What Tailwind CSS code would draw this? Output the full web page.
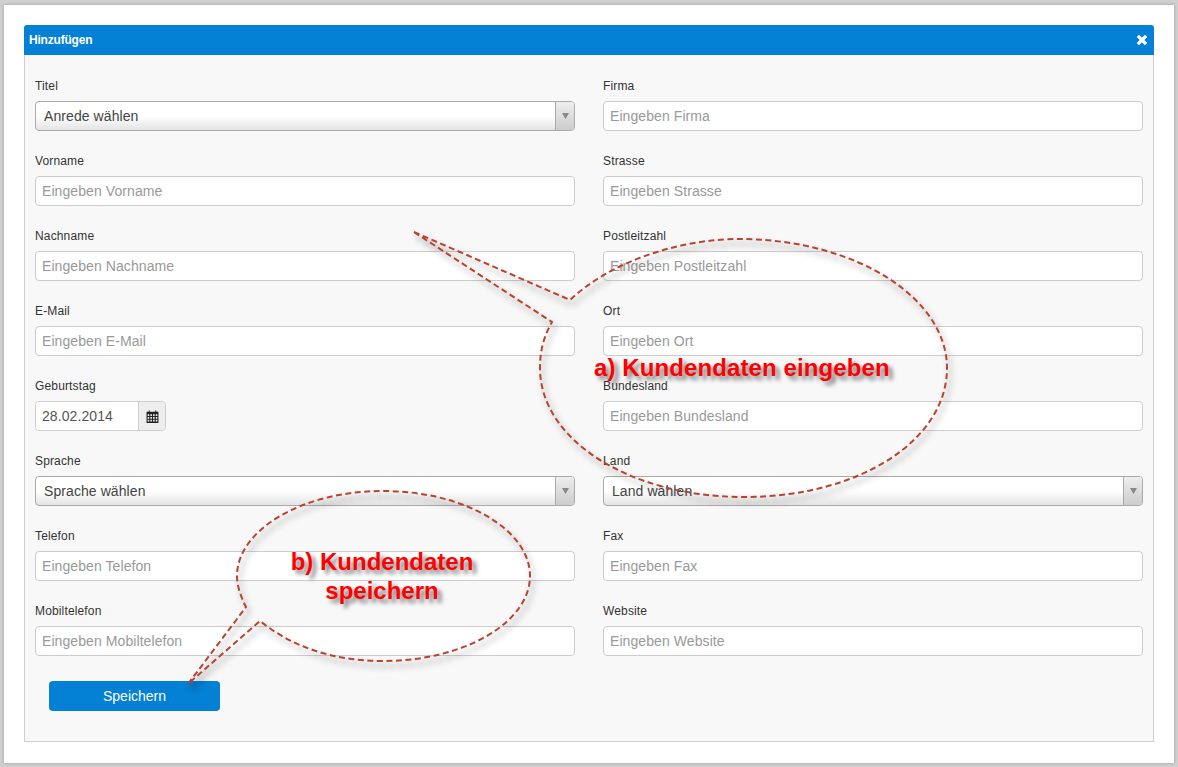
<!DOCTYPE html>
<html lang="de">
<head>
<meta charset="utf-8">
<title>Hinzufügen</title>
<script src="https://cdn.jsdelivr.net/npm/@tailwindcss/browser@4"></script>
</head>
<body class="bg-[#cfcfcf] font-['Liberation_Sans',Arial,sans-serif]">
<div class="relative w-[1178px] h-[767px] overflow-hidden pt-[5px] pl-[4px]">
  <div class="w-[1170px] h-[758px] bg-white pt-[20px] pl-[20px] shadow-[0_0_3px_rgba(0,0,0,0.25)]">
    <div class="w-[1130px]">
      <div class="h-[30px] bg-[#0480d4] rounded-t-[3px] flex items-center justify-between pl-[5px] pr-[6px]">
        <span class="text-[12px] font-bold text-white tracking-[-0.2px]">Hinzufügen</span>
        <svg width="12" height="12" viewBox="0 0 12 12"><path d="M1 3 L3 1 L6 4 L9 1 L11 3 L8 6 L11 9 L9 11 L6 8 L3 11 L1 9 L4 6 Z" fill="#fff" stroke="#fff" stroke-width="0.6" stroke-linejoin="round"/></svg>
      </div>
      <div class="h-[687px] bg-[#f8f8f8] border border-t-0 border-[#cfcfcf] px-[10px] pt-[21px]">
        <div class="grid grid-cols-2 gap-x-[28px] gap-y-[20px]">
          <div>
            <label class="block h-[20px] leading-[20px] mb-[5px] text-[12px] tracking-[0.15px] text-[#333]">Titel</label>
            <div class="h-[30px] flex border border-[#aaa] rounded-[4px] bg-linear-to-b from-white from-50% to-[#e4e4e4] overflow-hidden">
              <span class="flex-1 pl-[8px] leading-[28px] text-[14px] tracking-[0.08px] text-[#444]">Anrede wählen</span>
              <span class="w-[19px] border-l border-[#aaa] bg-linear-to-b from-[#eee] to-[#ccc] flex items-center justify-center"><svg width="7" height="6" viewBox="0 0 7 6"><path d="M0 0 H7 L3.5 6 Z" fill="#888"/></svg></span>
            </div>
          </div>
          <div>
            <label class="block h-[20px] leading-[20px] mb-[5px] text-[12px] tracking-[0.15px] text-[#333]">Firma</label>
            <input class="block w-full h-[30px] px-[6px] border border-[#ccc] rounded-[4px] bg-white text-[14px] tracking-[0.08px] placeholder:text-[#999]" placeholder="Eingeben Firma">
          </div>
          <div>
            <label class="block h-[20px] leading-[20px] mb-[5px] text-[12px] tracking-[0.15px] text-[#333]">Vorname</label>
            <input class="block w-full h-[30px] px-[6px] border border-[#ccc] rounded-[4px] bg-white text-[14px] tracking-[0.08px] placeholder:text-[#999]" placeholder="Eingeben Vorname">
          </div>
          <div>
            <label class="block h-[20px] leading-[20px] mb-[5px] text-[12px] tracking-[0.15px] text-[#333]">Strasse</label>
            <input class="block w-full h-[30px] px-[6px] border border-[#ccc] rounded-[4px] bg-white text-[14px] tracking-[0.08px] placeholder:text-[#999]" placeholder="Eingeben Strasse">
          </div>
          <div>
            <label class="block h-[20px] leading-[20px] mb-[5px] text-[12px] tracking-[0.15px] text-[#333]">Nachname</label>
            <input class="block w-full h-[30px] px-[6px] border border-[#ccc] rounded-[4px] bg-white text-[14px] tracking-[0.08px] placeholder:text-[#999]" placeholder="Eingeben Nachname">
          </div>
          <div>
            <label class="block h-[20px] leading-[20px] mb-[5px] text-[12px] tracking-[0.15px] text-[#333]">Postleitzahl</label>
            <input class="block w-full h-[30px] px-[6px] border border-[#ccc] rounded-[4px] bg-white text-[14px] tracking-[0.08px] placeholder:text-[#999]" placeholder="Eingeben Postleitzahl">
          </div>
          <div>
            <label class="block h-[20px] leading-[20px] mb-[5px] text-[12px] tracking-[0.15px] text-[#333]">E-Mail</label>
            <input class="block w-full h-[30px] px-[6px] border border-[#ccc] rounded-[4px] bg-white text-[14px] tracking-[0.08px] placeholder:text-[#999]" placeholder="Eingeben E-Mail">
          </div>
          <div>
            <label class="block h-[20px] leading-[20px] mb-[5px] text-[12px] tracking-[0.15px] text-[#333]">Ort</label>
            <input class="block w-full h-[30px] px-[6px] border border-[#ccc] rounded-[4px] bg-white text-[14px] tracking-[0.08px] placeholder:text-[#999]" placeholder="Eingeben Ort">
          </div>
          <div>
            <label class="block h-[20px] leading-[20px] mb-[5px] text-[12px] tracking-[0.15px] text-[#333]">Geburtstag</label>
            <div class="w-[131px] h-[30px] flex border border-[#ccc] rounded-[4px] overflow-hidden">
              <span class="w-[102px] bg-white pl-[6px] leading-[28px] text-[14px] tracking-[0.08px] text-[#555]">28.02.2014</span>
              <span class="flex-1 border-l border-[#ccc] bg-[#eee] flex items-center justify-center">
                <svg width="13" height="13" viewBox="0 0 12 12"><path fill-rule="evenodd" fill="#222" d="M0.5 1.5 H2.5 V0.5 H3.5 V1.5 H8.5 V0.5 H9.5 V1.5 H11.5 V12 H0.5 Z M1.5 4 V5.5 H3 V4 Z M4 4 V5.5 H5.5 V4 Z M6.5 4 V5.5 H8 V4 Z M9 4 V5.5 H10.5 V4 Z M1.5 6.5 V8 H3 V6.5 Z M4 6.5 V8 H5.5 V6.5 Z M6.5 6.5 V8 H8 V6.5 Z M9 6.5 V8 H10.5 V6.5 Z M1.5 9 V10.5 H3 V9 Z M4 9 V10.5 H5.5 V9 Z M6.5 9 V10.5 H8 V9 Z M9 9 V10.5 H10.5 V9 Z"/></svg>
              </span>
            </div>
          </div>
          <div>
            <label class="block h-[20px] leading-[20px] mb-[5px] text-[12px] tracking-[0.15px] text-[#333]">Bundesland</label>
            <input class="block w-full h-[30px] px-[6px] border border-[#ccc] rounded-[4px] bg-white text-[14px] tracking-[0.08px] placeholder:text-[#999]" placeholder="Eingeben Bundesland">
          </div>
          <div>
            <label class="block h-[20px] leading-[20px] mb-[5px] text-[12px] tracking-[0.15px] text-[#333]">Sprache</label>
            <div class="h-[30px] flex border border-[#aaa] rounded-[4px] bg-linear-to-b from-white from-50% to-[#e4e4e4] overflow-hidden">
              <span class="flex-1 pl-[8px] leading-[28px] text-[14px] tracking-[0.08px] text-[#444]">Sprache wählen</span>
              <span class="w-[19px] border-l border-[#aaa] bg-linear-to-b from-[#eee] to-[#ccc] flex items-center justify-center"><svg width="7" height="6" viewBox="0 0 7 6"><path d="M0 0 H7 L3.5 6 Z" fill="#888"/></svg></span>
            </div>
          </div>
          <div>
            <label class="block h-[20px] leading-[20px] mb-[5px] text-[12px] tracking-[0.15px] text-[#333]">Land</label>
            <div class="h-[30px] flex border border-[#aaa] rounded-[4px] bg-linear-to-b from-white from-50% to-[#e4e4e4] overflow-hidden">
              <span class="flex-1 pl-[8px] leading-[28px] text-[14px] tracking-[0.08px] text-[#444]">Land wählen</span>
              <span class="w-[19px] border-l border-[#aaa] bg-linear-to-b from-[#eee] to-[#ccc] flex items-center justify-center"><svg width="7" height="6" viewBox="0 0 7 6"><path d="M0 0 H7 L3.5 6 Z" fill="#888"/></svg></span>
            </div>
          </div>
          <div>
            <label class="block h-[20px] leading-[20px] mb-[5px] text-[12px] tracking-[0.15px] text-[#333]">Telefon</label>
            <input class="block w-full h-[30px] px-[6px] border border-[#ccc] rounded-[4px] bg-white text-[14px] tracking-[0.08px] placeholder:text-[#999]" placeholder="Eingeben Telefon">
          </div>
          <div>
            <label class="block h-[20px] leading-[20px] mb-[5px] text-[12px] tracking-[0.15px] text-[#333]">Fax</label>
            <input class="block w-full h-[30px] px-[6px] border border-[#ccc] rounded-[4px] bg-white text-[14px] tracking-[0.08px] placeholder:text-[#999]" placeholder="Eingeben Fax">
          </div>
          <div>
            <label class="block h-[20px] leading-[20px] mb-[5px] text-[12px] tracking-[0.15px] text-[#333]">Mobiltelefon</label>
            <input class="block w-full h-[30px] px-[6px] border border-[#ccc] rounded-[4px] bg-white text-[14px] tracking-[0.08px] placeholder:text-[#999]" placeholder="Eingeben Mobiltelefon">
          </div>
          <div>
            <label class="block h-[20px] leading-[20px] mb-[5px] text-[12px] tracking-[0.15px] text-[#333]">Website</label>
            <input class="block w-full h-[30px] px-[6px] border border-[#ccc] rounded-[4px] bg-white text-[14px] tracking-[0.08px] placeholder:text-[#999]" placeholder="Eingeben Website">
          </div>
        </div>
        <button class="block mt-[25px] ml-[14px] w-[171px] h-[30px] rounded-[4px] bg-[#0480d4] text-white text-[14px] pt-[1px]">Speichern</button>
      </div>
    </div>
  </div>

  <svg class="absolute left-0 top-0 pointer-events-none drop-shadow-[3px_5px_3px_rgba(0,0,0,0.45)]" width="1178" height="767" viewBox="0 0 1178 767" fill="none" stroke="#b8432f" stroke-width="2" stroke-dasharray="6 3.5">
    <path d="M414 232 L570 300 C 610 262, 680 238, 744 239 C 860 241, 947 300, 947 368 C 947 440, 860 497, 744 497 C 630 497, 540 440, 540 368 C 540 350, 544 336, 552 322 Z"/>
    <path d="M188 684 L246 607 C 240 595, 237 585, 237 576 C 237 530, 302 491, 383 491 C 465 491, 530 530, 530 576 C 530 622, 465 661, 383 661 C 330 661, 290 645, 260 621 Z"/>
  </svg>
  <div class="absolute left-[594px] top-[354px] text-[24px] leading-[28px] font-bold text-[#ff0000] whitespace-nowrap tracking-[0.1px] [text-shadow:4px_4px_4px_rgba(0,0,0,0.5)]">a) Kundendaten eingeben</div>
  <div class="absolute left-[282px] top-[547px] w-[200px] text-center text-[24px] leading-[29px] font-bold text-[#ff0000] [text-shadow:4px_4px_4px_rgba(0,0,0,0.5)]">b) Kundendaten<br>speichern</div>
</div>
</body>
</html>
